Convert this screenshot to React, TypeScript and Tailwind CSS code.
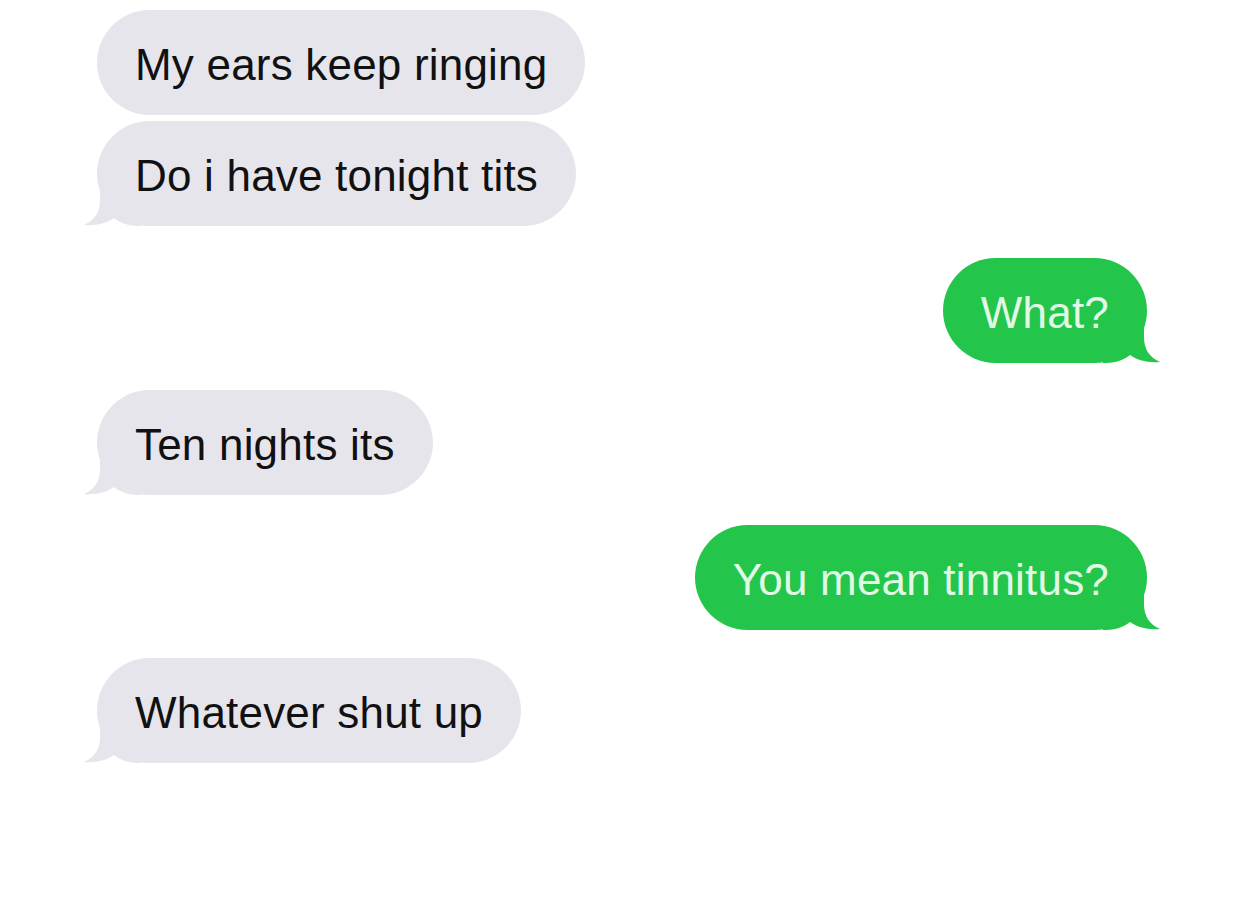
import React from "react";

type Msg = { text: string; me: boolean; tail: boolean; gap: string };

const msgs: Msg[] = [
  { text: "My ears keep ringing", me: false, tail: false, gap: "mt-0" },
  { text: "Do i have tonight tits", me: false, tail: true, gap: "mt-[6px]" },
  { text: "What?", me: true, tail: true, gap: "mt-[32px]" },
  { text: "Ten nights its", me: false, tail: true, gap: "mt-[27px]" },
  { text: "You mean tinnitus?", me: true, tail: true, gap: "mt-[30px]" },
  { text: "Whatever shut up", me: false, tail: true, gap: "mt-[28px]" },
];

function Tail({ me }: { me: boolean }) {
  const fill = me ? "#23c64b" : "#e6e5eb";
  if (me) {
    return (
      <svg
        className="absolute bottom-0 right-[-14px]"
        width="58"
        height="46"
        viewBox="0 0 58 46"
      >
        <path
          d="M41 0 L41 20 C41 32 46 40 57 45 C44 46 34 43 27 38 C22 42 14 46 3 46 L0 46 L0 0 Z"
          fill={fill}
        />
      </svg>
    );
  }
  return (
    <svg
      className="absolute bottom-0 left-[-14px]"
      width="58"
      height="46"
      viewBox="0 0 58 46"
    >
      <path
        d="M17 0 L17 20 C17 32 12 40 1 45 C14 46 24 43 31 38 C36 42 44 46 55 46 L58 46 L58 0 Z"
        fill={fill}
      />
    </svg>
  );
}

function Bubble({ m }: { m: Msg }) {
  return (
    <div className={`flex ${m.me ? "justify-end" : "justify-start"} ${m.gap}`}>
      <div
        className={`relative h-[105px] rounded-[53px] px-[38px] flex items-center pt-[4px] ${
          m.me ? "bg-[#23c64b] text-[#e2f8e6]" : "bg-[#e6e5eb] text-[#111111]"
        }`}
      >
        {m.tail && <Tail me={m.me} />}
        <span className="relative whitespace-nowrap text-[44px] leading-none tracking-[0.2px]">
          {m.text}
        </span>
      </div>
    </div>
  );
}

export default function App() {
  return (
    <div
      className="w-[1242px] h-[899px] bg-white pt-[10px] pl-[97px] pr-[95px] overflow-hidden"
      style={{ fontFamily: '"Liberation Sans", Arial, sans-serif' }}
    >
      {msgs.map((m, i) => (
        <Bubble key={i} m={m} />
      ))}
    </div>
  );
}
